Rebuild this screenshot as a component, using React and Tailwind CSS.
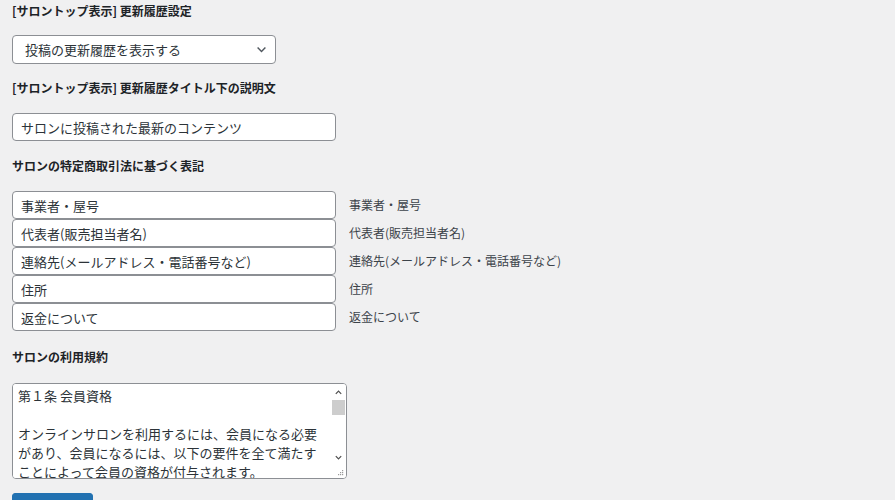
import React from 'react';

const tokushoFields = [
    { value: '事業者・屋号', label: '事業者・屋号' },
    { value: '代表者(販売担当者名)', label: '代表者(販売担当者名)' },
    { value: '連絡先(メールアドレス・電話番号など)', label: '連絡先(メールアドレス・電話番号など)' },
    { value: '住所', label: '住所' },
    { value: '返金について', label: '返金について' },
];

const terms = `第１条 会員資格

オンラインサロンを利用するには、会員になる必要があり、会員になるには、以下の要件を全て満たすことによって会員の資格が付与されます。

１．本規約に同意すること
２．所定の手続きを完了すること`;

const font = { fontFamily: '"Noto Sans CJK JP", "Noto Sans", sans-serif' };

const Heading = ({ children, className = '' }) => (
    <h2 className={`text-[12px] leading-[18px] font-bold text-[#1d2327] ${className}`}>{children}</h2>
);

const Chevron = ({ up }) => (
    <svg width="9" height="9" viewBox="0 0 10 10">
        <path d={up ? 'M2 6.5l3-3 3 3' : 'M2 3.5l3 3 3-3'} fill="none" stroke="#505050" strokeWidth="1.4" />
    </svg>
);

const App = () => {
    return (
        <div className="min-h-[500px] bg-[#f0f0f1] px-[12px] pt-[2px] overflow-hidden" style={font}>
            <Heading>[サロントップ表示] 更新履歴設定</Heading>
            <div className="relative mt-[15px] w-[264px]">
                <select
                    defaultValue="show"
                    className="appearance-none w-full h-[29px] pl-[12px] pr-[24px] text-[13px] text-[#2c3338] bg-white border border-[#8c8f94] rounded-[4px] outline-none"
                    style={font}
                >
                    <option value="show">投稿の更新履歴を表示する</option>
                    <option value="hide">投稿の更新履歴を表示しない</option>
                </select>
                <svg className="absolute right-[8px] top-[8px] pointer-events-none" width="13" height="13" viewBox="0 0 20 20">
                    <path d="M4 7l6 6 6-6" fill="none" stroke="#50575e" strokeWidth="2.2" />
                </svg>
            </div>

            <Heading className="mt-[15px]">[サロントップ表示] 更新履歴タイトル下の説明文</Heading>
            <input
                type="text"
                defaultValue="サロンに投稿された最新のコンテンツ"
                className="block mt-[16px] w-[324px] h-[28px] px-[8px] text-[13px] text-[#2c3338] bg-white border border-[#8c8f94] rounded-[4px] outline-none"
                style={font}
            />

            <Heading className="mt-[16px]">サロンの特定商取引法に基づく表記</Heading>
            <div className="mt-[16px] flex flex-col">
                {tokushoFields.map((f) => (
                    <div key={f.label} className="flex items-center h-[28px]">
                        <input
                            type="text"
                            defaultValue={f.value}
                            className="block w-[324px] h-[28px] px-[8px] text-[13px] text-[#2c3338] bg-white border border-[#8c8f94] rounded-[4px] outline-none"
                            style={font}
                        />
                        <span className="ml-[13px] text-[12px] text-[#3c434a]">{f.label}</span>
                    </div>
                ))}
            </div>

            <Heading className="mt-[17px]">サロンの利用規約</Heading>
            <div className="mt-[17px] w-[335px] h-[96px] flex bg-white border border-[#8c8f94] rounded-[4px] overflow-hidden">
                <textarea
                    defaultValue={terms}
                    className="flex-1 h-full pl-[5px] pr-[2px] py-[2px] text-[13px] leading-[19px] text-[#2c3338] bg-white outline-none resize-none overflow-hidden"
                    style={font}
                />
                {/* scrollbar */}
                <div className="w-[15px] flex flex-col bg-white">
                    <div className="h-[16px] flex items-center justify-center">
                        <Chevron up />
                    </div>
                    <div className="h-[15px] mx-[1px] bg-[#cdcdcd]" />
                    <div className="flex-1" />
                    <div className="h-[16px] flex items-center justify-center">
                        <Chevron />
                    </div>
                    <div className="h-[13px] flex items-end justify-end pr-[2px] pb-[2px]">
                        <svg width="7" height="7" viewBox="0 0 7 7">
                            <rect x="5" y="1" width="1.2" height="1.2" fill="#9a9a9a" />
                            <rect x="3" y="3" width="1.2" height="1.2" fill="#9a9a9a" />
                            <rect x="5" y="3" width="1.2" height="1.2" fill="#9a9a9a" />
                            <rect x="1" y="5" width="1.2" height="1.2" fill="#9a9a9a" />
                            <rect x="3" y="5" width="1.2" height="1.2" fill="#9a9a9a" />
                            <rect x="5" y="5" width="1.2" height="1.2" fill="#9a9a9a" />
                        </svg>
                    </div>
                </div>
            </div>

            <button className="mt-[14px] w-[81px] h-[32px] bg-[#2271b1] text-white text-[13px] rounded-[3px] border border-[#2271b1]">
                変更を保存
            </button>
        </div>
    );
};

export default App;
